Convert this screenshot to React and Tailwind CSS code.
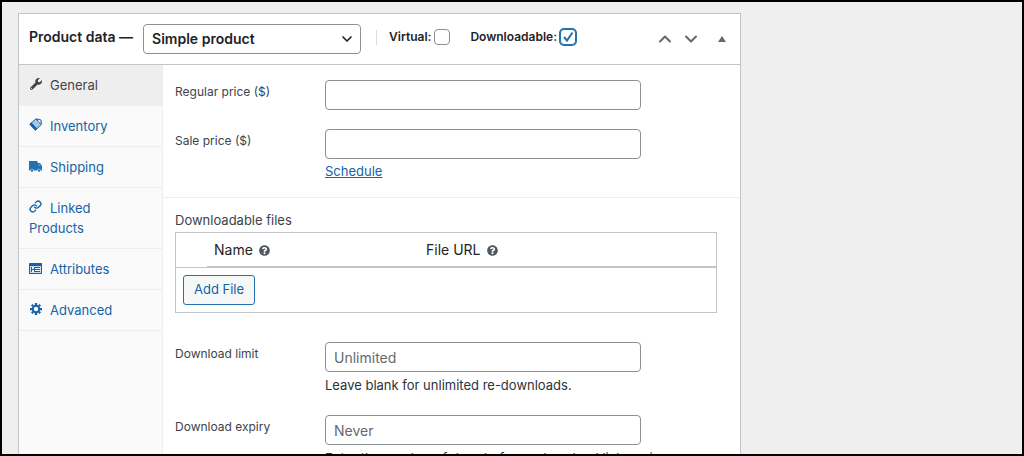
import { FaWrench, FaQuestionCircle } from 'react-icons/fa';
import { ChevronDown, ChevronUp, Link } from 'lucide-react';

const icons = {
  wrench: <FaWrench className="size-3" aria-hidden="true" />,
  tag: (
    <svg viewBox="0 0 13 13" className="size-[13px]" aria-hidden="true">
      <path d="M1 6 7 .8 12 2l.4 4.500L6.500 12z" fill="#a9c8e4" stroke="currentColor" strokeLinejoin="round" />
      <path d="M.3 6.200 6.300 12.700 8.300 10.700 2.500 4.500z" fill="currentColor" />
      <path d="M7 1l4.500 5" stroke="currentColor" />
      <circle cx="10.500" cy="3.300" r="1" fill="#fff" />
    </svg>
  ),
  truck: (
    <svg viewBox="0 0 26 22" className="h-[11px] w-[13px]" aria-hidden="true">
      <path d="M0 0h17v4h5l4 6v9H0z" fill="#2271b1" />
      <path d="M19 6h2l3 4h-5z" fill="#5f9acb" />
      <circle cx="6" cy="19" r="3.500" fill="#fafafa" />
      <circle cx="20" cy="19" r="3.500" fill="#fafafa" />
      <circle cx="6" cy="19" r="2.500" fill="#2271b1" />
      <circle cx="20" cy="19" r="2.500" fill="#2271b1" />
    </svg>
  ),
  link: <Link className="size-[13px]" strokeWidth={2.5} aria-hidden="true" />,
  form: (
    <svg viewBox="0 0 13 11" className="h-[11px] w-[13px]" aria-hidden="true">
      <rect width="13" height="11" rx=".5" fill="currentColor" />
      <path d="M1 3h11v7H1z" fill="#c9dced" />
      <path d="M2 4h9v5H2z" fill="currentColor" />
      <path d="M3 4h2v2H3zM3 7h2v2H3zM6 5h5v1H6zM6 7h5v1H6z" fill="#f1f6fa" />
    </svg>
  ),
  gear: (
    <svg viewBox="-12 -12 24 24" className="size-3" fill="none" stroke="currentColor" aria-hidden="true">
      <circle r="6.500" strokeWidth="4" />
      <path
        d="M0-8V-12M0 8V12M-8 0H-12M8 0H12M5.700-5.700l2.700-2.700M-5.700 5.700l-2.700 2.700M5.700 5.700l2.700 2.700M-5.700-5.700l-2.700-2.700"
        strokeWidth="4.500"
      />
    </svg>
  ),
};

const tabs = [
  { label: 'General', icon: 'wrench', active: true },
  { label: 'Inventory', icon: 'tag' },
  { label: 'Shipping', icon: 'truck' },
  { label: 'Linked Products', icon: 'link' },
  { label: 'Attributes', icon: 'form' },
  { label: 'Advanced', icon: 'gear' },
];

function Tab({ label, icon, active }) {
  return (
    <li className="border-b border-[#eee]">
      <a
        href="#"
        className={
          active
            ? 'block bg-[#eee] py-2.5 pr-5 pl-2.5 text-[13px] leading-5 text-[#444]'
            : 'block py-2.5 pr-5 pl-2.5 text-[13px] leading-5 text-[#1463a8]'
        }
      >
        <span className="mr-2 inline-flex w-[13px] justify-center">{icons[icon]}</span>
        {label}
      </a>
    </li>
  );
}

function Field({ id, label, placeholder, children }) {
  return (
    <div className="flex">
      <label htmlFor={id} className="w-[150px] shrink-0 text-xs leading-6 text-[#3c434a]">
        {label}
      </label>
      <div className="min-w-0 flex-1">
        <input
          id={id}
          type="text"
          placeholder={placeholder}
          className="block h-[30px] w-full max-w-[316px] rounded border border-[#8c8f94] bg-white px-2 text-sm text-[#2c3338] placeholder:text-[#646970]"
        />
        {children}
      </div>
    </div>
  );
}

function Help({ label }) {
  return (
    <button type="button" aria-label={label} className="ml-1.5 inline-flex align-[-1px] text-[#50575e]">
      <FaQuestionCircle className="size-[11px]" />
    </button>
  );
}

function Check({ id, label, checked }) {
  return (
    <div className="flex items-center gap-[3px]">
      <label htmlFor={id}>{label}</label>
      <span className="grid">
        <input
          id={id}
          type="checkbox"
          defaultChecked={checked}
          className="peer col-start-1 row-start-1 size-4 appearance-none rounded border border-[#8c8f94] bg-white checked:border-[#2271b1] checked:ring-1 checked:ring-[#2271b1]"
        />
        <svg
          viewBox="0 0 16 16"
          className="pointer-events-none invisible col-start-1 row-start-1 size-4 peer-checked:visible"
          fill="none"
          stroke="#2271b1"
          strokeWidth="2"
          aria-hidden="true"
        >
          <path d="M4 8 7 11.500 12.500 3.500" />
        </svg>
      </span>
    </div>
  );
}

export default function App() {
  return (
    <div className="h-screen overflow-hidden border-2 border-black bg-[#efefef] pt-[11px] pl-4 font-['Inter',sans-serif] text-[13px] text-[#1d2327]">
      <main className="mr-[281px] min-h-screen border border-[#c3c4c7] bg-white">
        <header className="flex h-[51px] items-center border-b border-[#c3c4c7] pr-3.5 pl-2.5 text-xs font-semibold">
          <h2 className="mr-2.5 pb-1 text-sm leading-5 whitespace-nowrap">Product data —</h2>
          <div className="grid w-[218px] items-center">
            <select
              aria-label="Product type"
              className="col-start-1 row-start-1 h-[30px] appearance-none rounded border border-[#8c8f94] bg-white px-2 text-sm font-semibold"
            >
              <option>Simple product</option>
              <option>Grouped product</option>
              <option>External/Affiliate product</option>
              <option>Variable product</option>
            </select>
            <ChevronDown
              className="pointer-events-none col-start-1 row-start-1 mr-1.5 size-4 justify-self-end"
              strokeWidth={2.5}
              aria-hidden="true"
            />
          </div>
          <div className="ml-[15px] flex items-center gap-5 pb-1">
            <div className="flex items-center gap-3">
              <span className="h-[15px] w-px bg-[#dcdcde]" />
              <Check id="virtual" label="Virtual:" />
            </div>
            <Check id="downloadable" label="Downloadable:" checked />
          </div>
          <div className="ml-auto flex items-center text-[#646970]">
            <button type="button" aria-label="Move up" className="grid w-[26px] place-items-center">
              <ChevronUp className="size-5" strokeWidth={2.5} />
            </button>
            <button type="button" aria-label="Move down" className="grid w-[26px] place-items-center">
              <ChevronDown className="size-5" strokeWidth={2.5} />
            </button>
            <button type="button" aria-label="Toggle panel" className="ml-3.5 grid place-items-center">
              <svg viewBox="0 0 8 6" className="h-1.5 w-2" fill="currentColor" aria-hidden="true">
                <path d="M4 0 8 6H0z" />
              </svg>
            </button>
          </div>
        </header>

        <div className="flex min-h-screen">
          <nav aria-label="Product data" className="w-36 shrink-0 border-r border-[#eee] bg-[#fafafa]">
            <ul>
              {tabs.map((tab) => (
                <Tab key={tab.label} {...tab} />
              ))}
            </ul>
          </nav>

          <div className="min-w-0 flex-1">
            <section className="flex flex-col gap-[19px] border-b border-[#eee] px-3 pt-[15px] pb-4">
              <Field id="regular-price" label="Regular price ($)" />
              <Field id="sale-price" label="Sale price ($)">
                <a href="#" className="mt-0.5 block w-fit leading-5 text-[#1463a8] underline">
                  Schedule
                </a>
              </Field>
            </section>

            <section className="px-3 pt-3">
              <h3 id="files-title" className="mb-0.5 text-[13px] leading-5 text-[#3c434a]">
                Downloadable files
              </h3>
              <div className="mr-[11px] border border-[#c3c4c7]">
                <table aria-labelledby="files-title" className="w-full table-fixed border-collapse text-left">
                  <thead>
                    <tr className="h-[34px] border-b border-[#c3c4c7] text-sm">
                      <td className="w-[31px]" />
                      <th className="w-[212px] border-b-2 border-[#c3c4c7] px-[7px] font-normal">
                        Name
                        <Help label="About the name" />
                      </th>
                      <th className="border-b-2 border-[#c3c4c7] px-[7px] font-normal">
                        File URL
                        <Help label="About the file URL" />
                      </th>
                    </tr>
                  </thead>
                  <tbody>
                    <tr>
                      <td colSpan={3} className="p-[7px]">
                        <button
                          type="button"
                          className="block h-[30px] rounded-[3px] border border-[#2271b1] bg-[#f6f7f7] px-2.5 text-[13px] text-[#1463a8]"
                        >
                          Add File
                        </button>
                      </td>
                    </tr>
                  </tbody>
                </table>
              </div>
            </section>

            <section className="flex flex-col gap-5 px-3 pt-[29px]">
              <Field id="download-limit" label="Download limit" placeholder="Unlimited">
                <p className="mt-[3px] leading-5 text-[#2c3338]">Leave blank for unlimited re-downloads.</p>
              </Field>
              <Field id="download-expiry" label="Download expiry" placeholder="Never">
                <p className="mt-[3px] max-w-[360px] leading-5 text-[#2c3338]">
                  Enter the number of days before a download link expires, or leave blank.
                </p>
              </Field>
            </section>
          </div>
        </div>
      </main>
    </div>
  );
}
